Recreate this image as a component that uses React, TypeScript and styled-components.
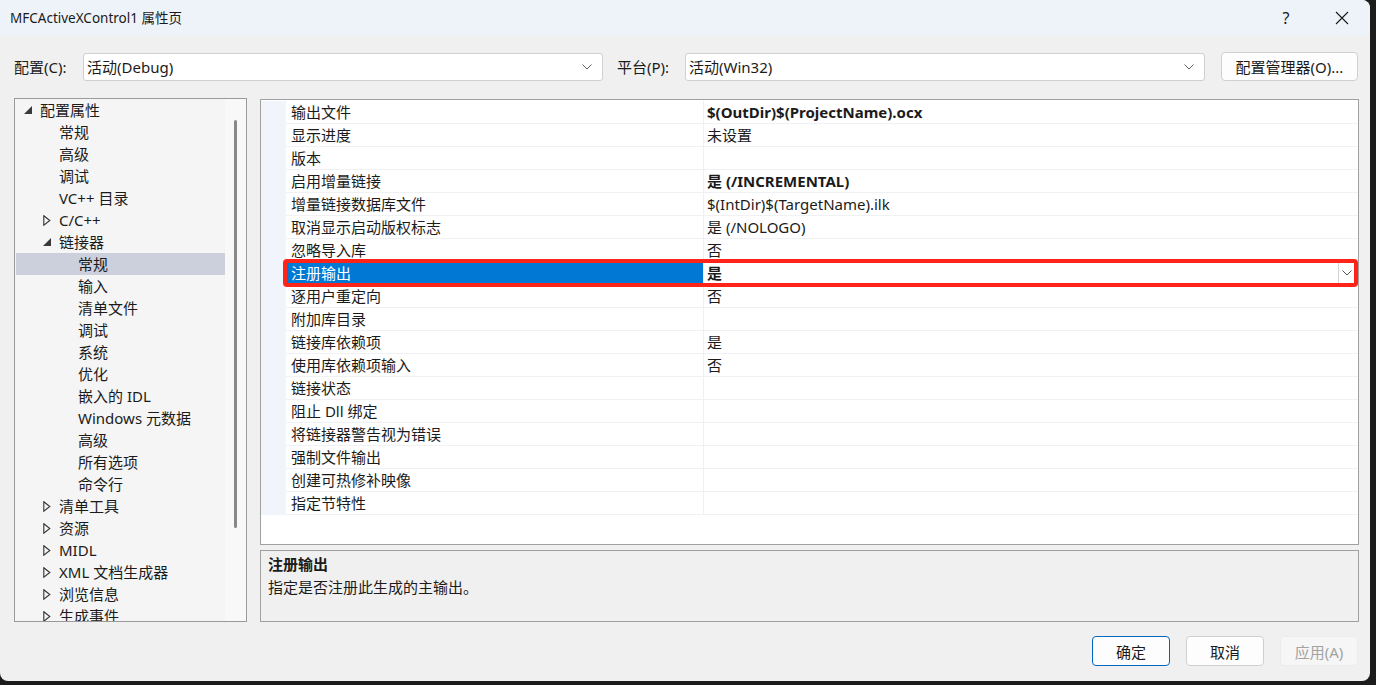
import React from 'react';
import styled, { createGlobalStyle } from 'styled-components';

const FONT = '"Noto Sans", "Noto Sans CJK SC", sans-serif';

const GlobalStyle = createGlobalStyle`
  html, body {
    margin: 0;
    padding: 0;
    background: #1c1c1c;
  }
  body {
    font-family: ${FONT};
    font-size: 15px;
    color: #1b1b1b;
  }
`;

const Window = styled.div`
  width: 1370px;
  height: 681px;
  background: #f0f0f0;
  border-radius: 0 8px 8px 8px;
  overflow: hidden;
  display: flex;
  flex-direction: column;
`;

const TitleBar = styled.div`
  height: 36px;
  flex: none;
  background: #eef3f9;
  display: flex;
  align-items: center;
  padding-left: 10px;
`;

const Title = styled.div`
  font-size: 13.5px;
  line-height: 20px;
  color: #1a1a1a;
  flex: 1;
`;

const CaptionButton = styled.div`
  width: 56px;
  height: 36px;
  display: flex;
  align-items: center;
  justify-content: center;
  font-size: 16px;
  color: #1a1a1a;
`;

const ConfigBar = styled.div`
  margin-top: 16px;
  height: 29px;
  padding-left: 14px;
  display: flex;
  align-items: center;
`;

const FieldLabel = styled.div<{ $w: number; $ml?: number }>`
  width: ${(p) => p.$w}px;
  margin-left: ${(p) => p.$ml ?? 0}px;
  font-size: 15px;
  line-height: 20px;
`;

const Combo = styled.div`
  width: 520px;
  height: 28px;
  box-sizing: border-box;
  background: #fff;
  border: 1px solid #cfcfcf;
  border-radius: 3px;
  display: flex;
  align-items: center;
  padding: 0 10px 0 3px;
  font-size: 15px;
`;

const ComboText = styled.div`
  flex: 1;
  line-height: 20px;
`;

const Button = styled.div<{ $primary?: boolean; $disabled?: boolean }>`
  height: 30px;
  box-sizing: border-box;
  border-radius: 4px;
  display: flex;
  align-items: center;
  justify-content: center;
  font-size: 15px;
  background: ${(p) => (p.$disabled ? '#f6f6f6' : '#fdfdfd')};
  color: ${(p) => (p.$disabled ? '#a3a3a3' : '#1a1a1a')};
  border: 1px solid
    ${(p) => (p.$primary ? '#0067c0' : p.$disabled ? '#ececec' : '#d0d0d0')};
`;

const ManagerButton = styled(Button)`
  width: 137px;
  height: 29px;
  margin-left: 16px;
`;

const Main = styled.div`
  margin-top: 17px;
  height: 524px;
  padding: 0 11px 0 14px;
  display: flex;
  gap: 13px;
`;

const TreePanel = styled.div`
  width: 233px;
  height: 524px;
  box-sizing: border-box;
  border: 1px solid #9a9a9a;
  background: #f5f5f5;
  display: flex;
  overflow: hidden;
`;

const TreeList = styled.div`
  width: 209px;
  padding-left: 1px;
`;

const TreeRow = styled.div<{ $level: number; $selected?: boolean }>`
  height: 22px;
  display: flex;
  align-items: center;
  padding-left: ${(p) => 8 + p.$level * 19}px;
  background: ${(p) => (p.$selected ? '#ccd0dd' : 'transparent')};
  font-size: 15px;
  line-height: 22px;
  white-space: nowrap;
`;

const Arrow = styled.div`
  width: 16px;
  flex: none;
  display: flex;
  align-items: center;
`;

const ScrollTrack = styled.div`
  flex: 1;
  background: #f8f8f8;
  display: flex;
  justify-content: center;
  padding-top: 21px;
`;

const ScrollThumb = styled.div`
  width: 3px;
  height: 408px;
  background: #888;
  border-radius: 2px;
`;

const RightColumn = styled.div`
  flex: 1;
  padding-top: 1px;
  display: flex;
  flex-direction: column;
  gap: 5px;
`;

const GridFrame = styled.div`
  height: 446px;
  box-sizing: border-box;
  border: 1px solid #a0a0a0;
  background: #fff;
  padding-top: 1px;
`;

const PropRow = styled.div`
  position: relative;
  height: 23px;
  display: grid;
  grid-template-columns: 25px 417px 1fr;
`;

const Strip = styled.div`
  background: #f1f5fb;
`;

const NameCell = styled.div<{ $selected?: boolean }>`
  box-sizing: border-box;
  border-bottom: 1px solid #f0f1f4;
  padding-left: 5px;
  line-height: 22px;
  font-size: 15px;
  background: ${(p) => (p.$selected ? '#0078d4' : 'transparent')};
  color: ${(p) => (p.$selected ? '#fff' : '#1b1b1b')};
  white-space: nowrap;
`;

const ValueCell = styled.div<{ $bold?: boolean }>`
  box-sizing: border-box;
  border-left: 1px solid #eef0f4;
  border-bottom: 1px solid #f0f1f4;
  padding-left: 3px;
  line-height: 22px;
  font-size: 15px;
  font-weight: ${(p) => (p.$bold ? 700 : 400)};
  display: flex;
  align-items: center;
  white-space: nowrap;
`;

const ValueText = styled.div`
  flex: 1;
`;

const DropButton = styled.div`
  width: 17px;
  height: 21px;
  margin-right: 3px;
  box-sizing: border-box;
  border-left: 1px solid #d4d4d4;
  display: flex;
  align-items: center;
  justify-content: center;
`;

const Highlight = styled.div`
  position: absolute;
  z-index: 2;
  left: 22px;
  right: 0;
  top: -3px;
  bottom: -2px;
  border: 4px solid #ff2419;
  border-radius: 4px;
  pointer-events: none;
`;

const DescPanel = styled.div`
  height: 72px;
  box-sizing: border-box;
  border: 1px solid #a0a0a0;
  background: #f0f0f0;
  padding: 2px 7px 0;
  font-size: 15px;
  line-height: 23px;
`;

const DescTitle = styled.div`
  font-weight: 700;
`;

const Footer = styled.div`
  margin-top: 14px;
  padding-right: 12px;
  display: flex;
  justify-content: flex-end;
  gap: 16px;
`;

const DialogButton = styled(Button)`
  width: 78px;
`;

const Chevron = ({ color = '#606060' }: { color?: string }) => (
  <svg width="10" height="6" viewBox="0 0 10 6">
    <path d="M0.5 0.5 L5 5 L9.5 0.5" fill="none" stroke={color} strokeWidth="1" />
  </svg>
);

const OpenArrow = () => (
  <svg width="8" height="8" viewBox="0 0 8 8">
    <path d="M8 0 L8 8 L0 8 Z" fill="#3a3a3a" />
  </svg>
);

const ClosedArrow = () => (
  <svg width="8" height="11" viewBox="0 0 8 11">
    <path d="M0.8 0.8 L6.8 5.5 L0.8 10.2 Z" fill="none" stroke="#333" strokeWidth="1.1" />
  </svg>
);

type TreeItem = { label: string; level: number; arrow?: 'open' | 'closed'; selected?: boolean };

const treeItems: TreeItem[] = [
  { label: '配置属性', level: 0, arrow: 'open' },
  { label: '常规', level: 1 },
  { label: '高级', level: 1 },
  { label: '调试', level: 1 },
  { label: 'VC++ 目录', level: 1 },
  { label: 'C/C++', level: 1, arrow: 'closed' },
  { label: '链接器', level: 1, arrow: 'open' },
  { label: '常规', level: 2, selected: true },
  { label: '输入', level: 2 },
  { label: '清单文件', level: 2 },
  { label: '调试', level: 2 },
  { label: '系统', level: 2 },
  { label: '优化', level: 2 },
  { label: '嵌入的 IDL', level: 2 },
  { label: 'Windows 元数据', level: 2 },
  { label: '高级', level: 2 },
  { label: '所有选项', level: 2 },
  { label: '命令行', level: 2 },
  { label: '清单工具', level: 1, arrow: 'closed' },
  { label: '资源', level: 1, arrow: 'closed' },
  { label: 'MIDL', level: 1, arrow: 'closed' },
  { label: 'XML 文档生成器', level: 1, arrow: 'closed' },
  { label: '浏览信息', level: 1, arrow: 'closed' },
  { label: '生成事件', level: 1, arrow: 'closed' },
];

type Prop = { name: string; value: string; bold?: boolean; selected?: boolean };

const props: Prop[] = [
  { name: '输出文件', value: '$(OutDir)$(ProjectName).ocx', bold: true },
  { name: '显示进度', value: '未设置' },
  { name: '版本', value: '' },
  { name: '启用增量链接', value: '是 (/INCREMENTAL)', bold: true },
  { name: '增量链接数据库文件', value: '$(IntDir)$(TargetName).ilk' },
  { name: '取消显示启动版权标志', value: '是 (/NOLOGO)' },
  { name: '忽略导入库', value: '否' },
  { name: '注册输出', value: '是', bold: true, selected: true },
  { name: '逐用户重定向', value: '否' },
  { name: '附加库目录', value: '' },
  { name: '链接库依赖项', value: '是' },
  { name: '使用库依赖项输入', value: '否' },
  { name: '链接状态', value: '' },
  { name: '阻止 Dll 绑定', value: '' },
  { name: '将链接器警告视为错误', value: '' },
  { name: '强制文件输出', value: '' },
  { name: '创建可热修补映像', value: '' },
  { name: '指定节特性', value: '' },
];

const App = () => {
  return (
    <>
      <GlobalStyle />
      <Window>
        <TitleBar>
          <Title>MFCActiveXControl1 属性页</Title>
          <CaptionButton>?</CaptionButton>
          <CaptionButton>
            <svg width="14" height="14" viewBox="0 0 14 14">
              <path d="M1 1 L13 13 M13 1 L1 13" stroke="#1a1a1a" strokeWidth="1.1" />
            </svg>
          </CaptionButton>
        </TitleBar>

        <ConfigBar>
          <FieldLabel $w={69}>配置(C):</FieldLabel>
          <Combo>
            <ComboText>活动(Debug)</ComboText>
            <Chevron />
          </Combo>
          <FieldLabel $w={68} $ml={14}>
            平台(P):
          </FieldLabel>
          <Combo>
            <ComboText>活动(Win32)</ComboText>
            <Chevron />
          </Combo>
          <ManagerButton>配置管理器(O)...</ManagerButton>
        </ConfigBar>

        <Main>
          <TreePanel>
            <TreeList>
              {treeItems.map((item, i) => (
                <TreeRow key={i} $level={item.level} $selected={item.selected}>
                  <Arrow>
                    {item.arrow === 'open' && <OpenArrow />}
                    {item.arrow === 'closed' && <ClosedArrow />}
                  </Arrow>
                  {item.label}
                </TreeRow>
              ))}
            </TreeList>
            <ScrollTrack>
              <ScrollThumb />
            </ScrollTrack>
          </TreePanel>

          <RightColumn>
            <GridFrame>
              {props.map((p, i) => (
                <PropRow key={i}>
                  <Strip />
                  <NameCell $selected={p.selected}>{p.name}</NameCell>
                  <ValueCell $bold={p.bold}>
                    <ValueText>{p.value}</ValueText>
                    {p.selected && (
                      <DropButton>
                        <Chevron color="#555" />
                      </DropButton>
                    )}
                  </ValueCell>
                  {p.selected && <Highlight />}
                </PropRow>
              ))}
            </GridFrame>
            <DescPanel>
              <DescTitle>注册输出</DescTitle>
              <div>指定是否注册此生成的主输出。</div>
            </DescPanel>
          </RightColumn>
        </Main>

        <Footer>
          <DialogButton $primary>确定</DialogButton>
          <DialogButton>取消</DialogButton>
          <DialogButton $disabled>应用(A)</DialogButton>
        </Footer>
      </Window>
    </>
  );
};

export default App;
